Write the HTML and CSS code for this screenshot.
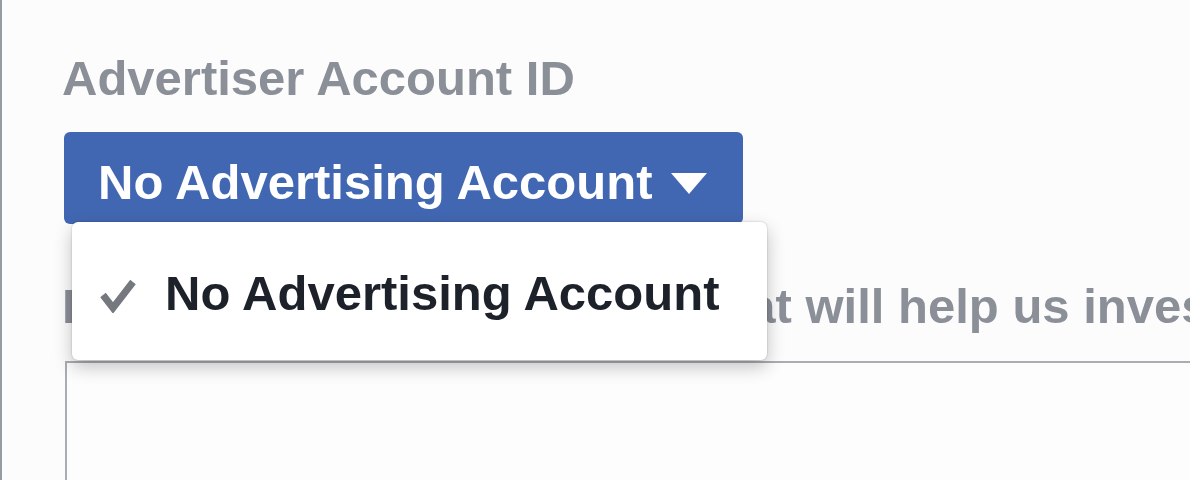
FILE: index.html
```html
<!DOCTYPE html>
<html lang="en">
<head>
<meta charset="utf-8">
<title>Advertiser Account ID</title>
<link rel="stylesheet" href="styles.css">
</head>
<body>
<div class="panel">
  <div class="field">
    <div class="label">Advertiser Account ID</div>
    <div class="select-wrap">
      <button class="select-btn" type="button">
        <span class="select-text">No Advertising Account</span>
        <svg class="caret" width="36" height="21" viewBox="0 0 36 21" aria-hidden="true"><polygon points="0,0 36,0 18,21" fill="#ffffff"/></svg>
      </button>
      <div class="menu">
        <div class="menu-item">
          <svg class="check" width="36" height="34" viewBox="0 0 36 34" aria-hidden="true"><polyline points="3,16 13,29 33,3" fill="none" stroke="#75797f" stroke-width="7" stroke-linejoin="miter"/></svg>
          <span class="menu-text">No Advertising Account</span>
        </div>
      </div>
    </div>
  </div>
  <div class="field">
    <div class="label desc">Please describe the details that will help us investigate this issue</div>
    <div class="textarea"></div>
  </div>
</div>
</body>
</html>
```

FILE: styles.css
```css
html, body {
  margin: 0;
  padding: 0;
  background: #fcfcfd;
  overflow: hidden;
}
body {
  width: 1190px;
  height: 480px;
  font-family: "Liberation Sans", Arial, Helvetica, sans-serif;
}
.panel {
  height: 480px;
  border-left: 2px solid #979ba2;
  padding: 50px 0 0 60px;
  box-sizing: border-box;
  overflow: hidden;
}
.label {
  font-size: 49px;
  line-height: 56px;
  font-weight: bold;
  color: #8b8f97;
  white-space: nowrap;
}
.select-wrap {
  position: relative;
  margin-top: 26px;
  margin-left: 2px;
}
.select-btn {
  display: inline-flex;
  align-items: center;
  gap: 19px;
  padding: 22px 36px 14px 34px;
  border: 0;
  border-radius: 6px;
  background: #4267b2;
  color: #ffffff;
  font-family: inherit;
  font-size: 49px;
  line-height: 56px;
  font-weight: bold;
  cursor: pointer;
}
.caret {
  display: block;
  margin-top: 2px;
}
.menu {
  position: absolute;
  left: 8px;
  top: 90px;
  width: 695px;
  height: 138px;
  box-sizing: border-box;
  background: #ffffff;
  border-radius: 6px;
  box-shadow: 0 7px 18px rgba(0, 0, 0, 0.24), 0 0 2px rgba(0, 0, 0, 0.25);
  padding: 43px 0 0 28px;
}
.menu-item {
  display: flex;
  align-items: center;
  gap: 29px;
}
.check {
  display: block;
  margin-top: 6px;
}
.menu-text {
  font-size: 49px;
  line-height: 56px;
  font-weight: bold;
  color: #1d2129;
  white-space: nowrap;
}
.desc {
  margin-top: 54px;
}
.textarea {
  margin-top: 27px;
  margin-left: 3px;
  height: 200px;
  border: 2px solid #a9adb3;
  border-right: 0;
  background: #fdfdfe;
}
```
